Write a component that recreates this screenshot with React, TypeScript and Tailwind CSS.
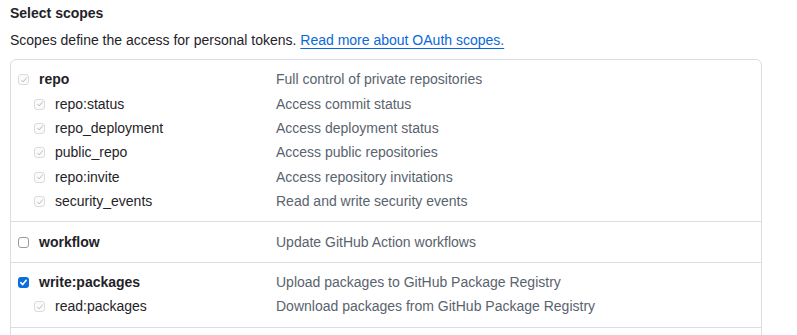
import React from "react";

type Scope = { name: string; desc: string; sub?: boolean; state: "disabled" | "off" | "on" };

const groups: Scope[][] = [
  [
    { name: "repo", desc: "Full control of private repositories", state: "disabled" },
    { name: "repo:status", desc: "Access commit status", sub: true, state: "disabled" },
    { name: "repo_deployment", desc: "Access deployment status", sub: true, state: "disabled" },
    { name: "public_repo", desc: "Access public repositories", sub: true, state: "disabled" },
    { name: "repo:invite", desc: "Access repository invitations", sub: true, state: "disabled" },
    { name: "security_events", desc: "Read and write security events", sub: true, state: "disabled" },
  ],
  [{ name: "workflow", desc: "Update GitHub Action workflows", state: "off" }],
  [
    { name: "write:packages", desc: "Upload packages to GitHub Package Registry", state: "on" },
    { name: "read:packages", desc: "Download packages from GitHub Package Registry", sub: true, state: "disabled" },
  ],
];

function Box({ state }: { state: Scope["state"] }) {
  if (state === "on") {
    return (
      <span className="flex size-[11px] items-center justify-center rounded-[3px] bg-[#0b6dde]">
        <svg viewBox="0 0 10 10" className="size-[9px]" fill="none" stroke="white" strokeWidth="1.8" strokeLinecap="round" strokeLinejoin="round">
          <path d="M2 5.2 4.1 7.3 8 2.6" />
        </svg>
      </span>
    );
  }
  if (state === "off") {
    return <span className="size-[11px] rounded-[3px] border border-[#9a9a9a] bg-white" />;
  }
  return (
    <span className="flex size-[11px] items-center justify-center rounded-[3px] border border-[#dcdcdc] bg-[#fbfbfb]">
      <svg viewBox="0 0 10 10" className="size-[8px]" fill="none" stroke="#b4b4b4" strokeWidth="1.1" strokeLinecap="round" strokeLinejoin="round">
        <path d="M2 5.3 4 7.4 8.2 2.2" />
      </svg>
    </span>
  );
}

export default function App() {
  return (
    <div className="h-[335px] w-[797px] overflow-hidden bg-white px-[10px] text-[14px] text-[#1f2328]" style={{ fontFamily: '"Liberation Sans", Arial, sans-serif' }}>
      <h3 className="pt-[4px] text-[14px] font-bold leading-[18px]">Select scopes</h3>
      <p className="mt-[9px] leading-[18px]">
        Scopes define the access for personal tokens.{" "}
        <a className="text-[#0969da] underline underline-offset-[3px]">Read more about OAuth scopes.</a>
      </p>
      <div className="mt-[10px] w-[752px] rounded-[6px] border border-[#d8dee4]">
        {groups.map((g, gi) => (
          <div key={gi} className="border-b border-[#d8dee4] py-[7.5px]">
            {g.map((s) => (
              <div key={s.name} className="flex h-[24.4px] items-center">
                <div className={`flex w-[265px] shrink-0 items-center ${s.sub ? "pl-[23px]" : "pl-[7px]"}`}>
                  <Box state={s.state} />
                  <span className={`ml-[10px] ${s.sub ? "" : "font-bold"}`}>{s.name}</span>
                </div>
                <span className="text-[#59636e]">{s.desc}</span>
              </div>
            ))}
          </div>
        ))}
        <div className="h-[24px]" />
      </div>
    </div>
  );
}
